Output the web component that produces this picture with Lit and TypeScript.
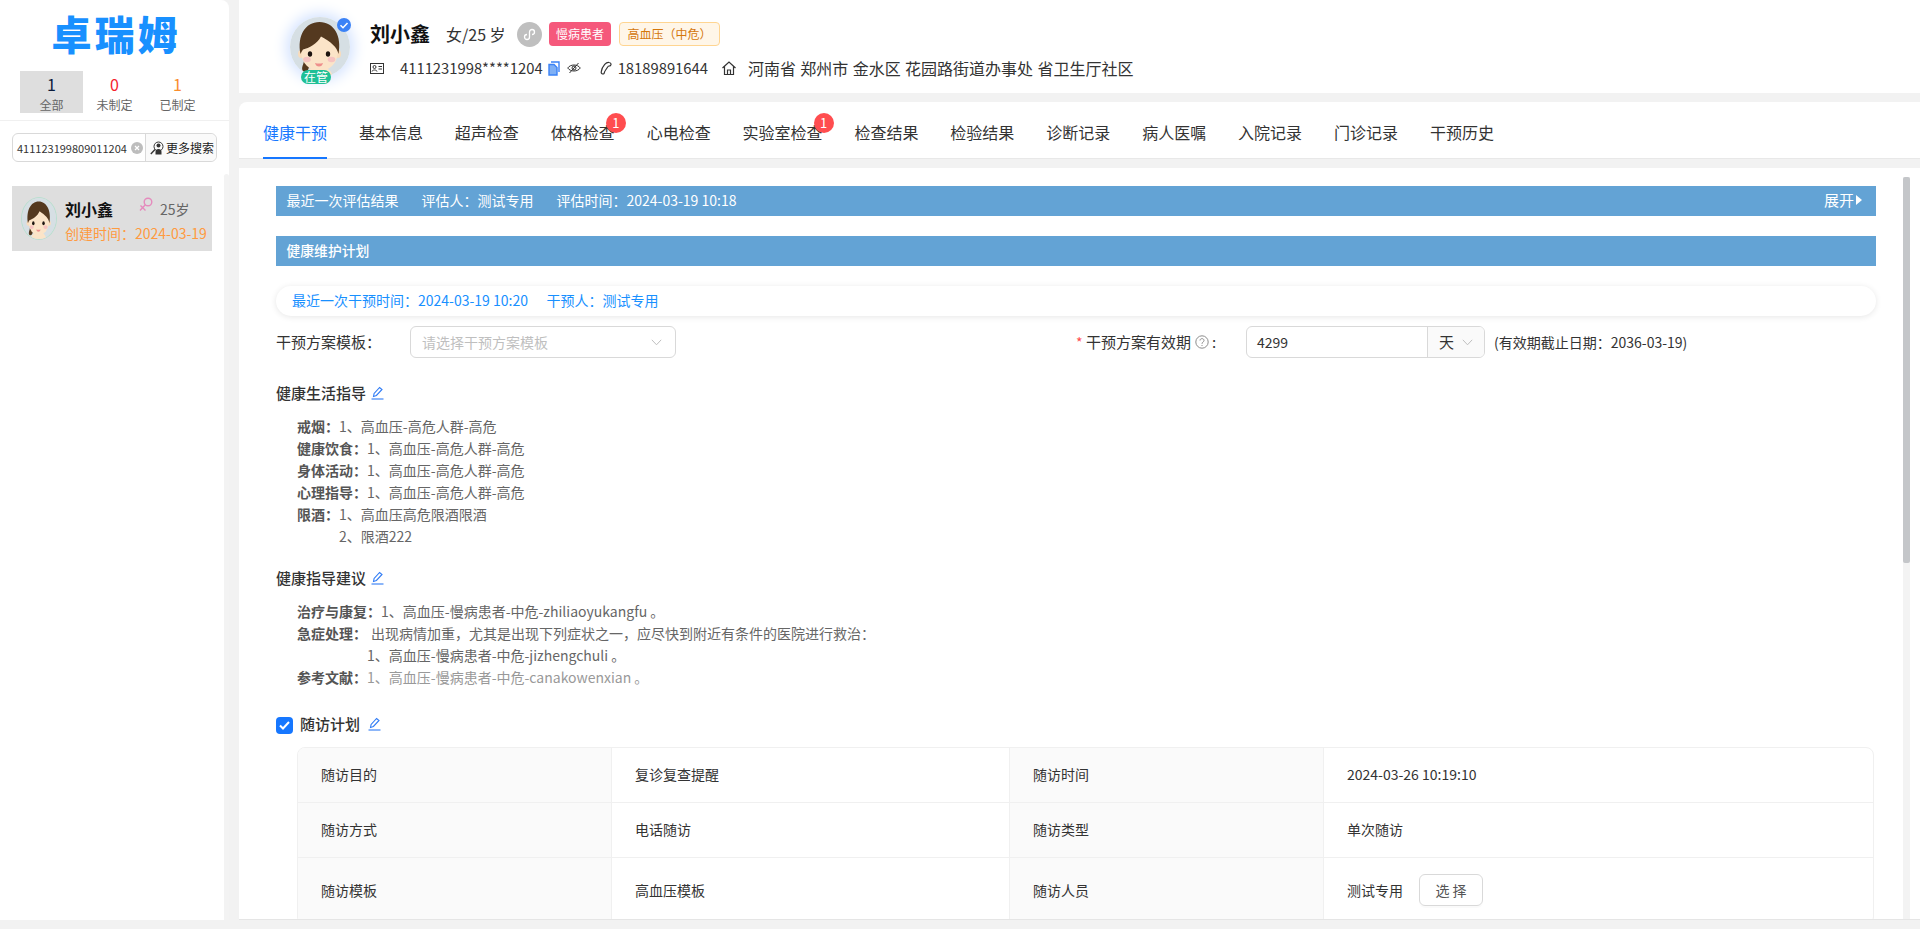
import { LitElement, html, css, svg } from "lit";
import { customElement } from "lit/decorators.js";

const face = (w: number, h: number) => svg`
  <svg class="face" width=${w} height=${h} viewBox="0 0 60 60" preserveAspectRatio="none">
    <rect width="60" height="60" fill="#d6dfe4"/>
    <path d="M14 44c-1 5-3 7-1 10 3 2 6-1 6-5z" fill="#54391f"/>
    <path d="M16 60c1-8 6-10 13-10s12 2 14 10z" fill="#fbe4c8"/>
    <ellipse cx="11" cy="37" rx="3" ry="4" fill="#f8dcbc"/>
    <ellipse cx="48" cy="37" rx="3" ry="4" fill="#f8dcbc"/>
    <ellipse cx="29.500" cy="36" rx="18" ry="18" fill="#fbe4c8"/>
    <path d="M10.500 37C7 19 15 5 29.500 5S52 19 48.500 37C47 30 41 25 31 19.500 27 27 19 31 13 32.500c-1 1.500-2 3-2.500 4.500z" fill="#54391f"/>
    <ellipse cx="20" cy="37" rx="2.200" ry="2.800" fill="#1c1410"/>
    <ellipse cx="38" cy="37" rx="2.200" ry="2.800" fill="#1c1410"/>
    <ellipse cx="17" cy="42.500" rx="3.800" ry="2.800" fill="#f6c3c0"/>
    <ellipse cx="41.500" cy="42.500" rx="3.800" ry="2.800" fill="#f6c3c0"/>
    <path d="M25 46q4 1 8 0q-1 3.500-4 3.500t-4-3.500z" fill="#ee8f8c"/>
  </svg>`;

const pencil = svg`<svg class="pen" width="13" height="14" viewBox="0 0 13 14" fill="none" stroke="#2f7bf5" stroke-width="1.100">
  <path d="M2.500 10.500l.6-3L8.600 1.500l2.400 2-5.600 6z"/><path d="M.500 13h12"/></svg>`;

const chevron = (c = "#bfbfbf") => svg`<svg width="11" height="7" viewBox="0 0 11 7" fill="none" stroke=${c} stroke-width="1"><path d="M.8.800l4.700 5 4.700-5"/></svg>`;

@customElement("app-root")
export class AppRoot extends LitElement {
  static styles = css`
    :host { display: block; width: 1920px; height: 929px; overflow: hidden; background: #f2f2f2;
      font-family: "Noto Sans CJK SC", "Liberation Sans", sans-serif; font-size: 14px; color: #333; line-height: 22px; }
    * { box-sizing: border-box; }
    svg { display: block; flex: none; }
    .layout { display: flex; height: 929px; }

    /* sidebar */
    aside { position: relative; width: 229px; height: 920px; background: #fff; border-top-right-radius: 8px; }
    .logo { height: 71px; padding-top: 9px; text-align: center; font-size: 40px; line-height: 48px; font-weight: 900; color: #1890ff; letter-spacing: 3px; text-indent: 3px; }
    .stats { display: flex; padding: 0 20px 7px; border-bottom: 1px solid #f0f0f0; height: 50px; }
    .stat { width: 63px; height: 42px; text-align: center; font-size: 12px; line-height: 18px; color: #666; padding-top: 3px; }
    .stat b { display: block; font-size: 16px; font-weight: 400; line-height: 20px; margin-bottom: 2px; }
    .stat.on { background: #dedede; }
    .n0 { color: #0a1a3a; } .n1 { color: #f5222d; } .n2 { color: #fa8c2c; }
    .search { display: flex; margin: 12px 12px 0; width: 205px; height: 29px; border: 1px solid #d9d9d9; border-radius: 6px; align-items: center; }
    .search .val { width: 133px; height: 100%; display: flex; align-items: center; padding-left: 4px; gap: 4px; border-right: 1px solid #d9d9d9;
      font-size: 11px; color: #333; white-space: nowrap; }
    .search .more { display: flex; align-items: center; gap: 2px; padding-left: 4px; font-size: 12px; color: #222; white-space: nowrap; background: #fafafa; height: 100%; flex: 1; border-radius: 0 6px 6px 0; }
    .pcard { display: flex; margin: 24px 12px 0; width: 200px; height: 65px; background: #dedede; padding: 11px 0 0 9px; }
    .oval { width: 36px; height: 43px; border-radius: 50%; border: 1px solid #b9dfd0; overflow: hidden; flex: none; }
    .pinfo { margin-left: 8px; white-space: nowrap; }
    .pline { display: flex; align-items: center; height: 24px; }
    .pname { font-size: 16px; font-weight: 700; color: #111; width: 74px; }
    .pline svg { margin-bottom: 10px; }
    .page { margin-left: 7px; color: #666; }
    .ptime { color: #ff9a3e; line-height: 22px; margin-top: 1px; }
    .strack { position: absolute; right: 0; top: 174px; bottom: 0; width: 5px; background: #f3f3f3; border-radius: 3px 3px 0 0; }

    /* main */
    main { margin-left: 10px; width: 1681px; display: flex; flex-direction: column; }
    header { height: 93px; background: #fff; display: flex; padding: 17px 0 0 51px; }
    .av { position: relative; width: 60px; height: 60px; flex: none; }
    .av .ring { width: 60px; height: 60px; border-radius: 50%; overflow: hidden; box-shadow: 0 0 14px 4px #d4e3ff; }
    .ok { position: absolute; right: -1px; top: 1px; }
    .st { position: absolute; left: 11px; top: 53px; width: 30px; height: 14px; border-radius: 7px; background: #1fbf96; color: #fff; font-size: 12px; line-height: 14px; text-align: center; }
    .info { margin: 5px 0 0 20px; }
    .r1 { display: flex; align-items: center; height: 24px; white-space: nowrap; }
    .hname { font-size: 20px; font-weight: 700; color: #111; }
    .hage { margin-left: 16px; font-size: 16px; color: #333; width: 58px; }
    .mp { margin-left: 13px; width: 25px; height: 25px; border-radius: 50%; background: #bfbfbf; display: flex; align-items: center; justify-content: center; }
    .tag { height: 24px; line-height: 22px; font-size: 12px; border-radius: 4px; padding: 0 7.500px; border: 1px solid transparent; }
    .t1 { margin-left: 7px; background: #f5587b; color: #fff; padding: 0 6px; }
    .t2 { margin-left: 8px; background: #fff6e8; border-color: #ffd591; color: #d4770c; }
    .r2 { display: flex; align-items: center; height: 20px; margin-top: 12px; white-space: nowrap; font-size: 16px; color: #333; }
    .idno { margin-left: 16px; font-size: 14.800px; }
    .i-copy { margin-left: 5px; } .i-eye { margin-left: 7px; } .i-phone { margin-left: 19px; }
    .tel { margin-left: 6px; font-size: 14.800px; } .i-home { margin-left: 14px; } .addr { margin-left: 12px; word-spacing: .8px; }

    .tabs { margin-top: 9px; height: 57px; background: #fff; border-top-left-radius: 8px; border-bottom: 1px solid #e8e8e8; display: flex; gap: 31.900px; padding-left: 24px; }
    .tab { position: relative; font-size: 16px; line-height: 22px; padding-top: 19px; height: 57px; color: #333; white-space: nowrap; }
    .tab.on { color: #1677ff; border-bottom: 2px solid #1677ff; }
    .bdg { position: absolute; right: -11px; top: 11px; width: 20px; height: 20px; border-radius: 50%; background: #ff4d4f; color: #fff; font-size: 13px; line-height: 20px; text-align: center; }

    .body { margin-top: 9px; height: 752px; background: #fff; border-bottom: 1px solid #e5e5e5; display: flex; overflow: hidden; }
    .scroller { width: 1664px; padding: 18px 27px 0 37px; height: 751px; overflow: hidden; flex: none; }
    .vtrack { width: 7px; margin-top: 9px; background: #f3f3f3; flex: none; }
    .thumb { height: 386px; background: #c4c6c9; border-radius: 2px; }

    .bar { height: 30px; background: #63a3d5; color: #fff; display: flex; align-items: center; padding: 0 14px 2px 10.500px; white-space: nowrap; }
    .bar span + span { margin-left: 23px; }
    .bar .exp { margin-left: auto; display: flex; align-items: center; gap: 2px; font-size: 15px; }
    .bar2 { margin-top: 20px; font-weight: 500; font-size: 13.800px; }
    .pill { margin-top: 20px; height: 30px; border-radius: 15px; background: #fff; box-shadow: 0 1px 6px rgba(0,0,0,.1); color: #1890ff; display: flex; align-items: center; padding: 0 16px 2px; gap: 18.500px; white-space: nowrap; }
    .form { margin-top: 10px; height: 32px; display: flex; align-items: center; }
    .lb { font-size: 15px; color: #333; white-space: nowrap; width: 134px; }
    .sel { width: 266px; height: 32px; border: 1px solid #d9d9d9; border-radius: 6px; display: flex; align-items: center; justify-content: space-between; padding: 0 13px 0 11px; color: #bfbfbf; }
    .rq { margin-left: 400px; display: flex; align-items: center; width: 170px; font-size: 15px; white-space: nowrap; }
    .rq i { color: #ff4d4f; font-style: normal; margin-right: 4px; font-size: 14px; width: 6px; }
    .rq svg { margin: 0 3px 0 4px; }
    .num { width: 239px; height: 32px; border: 1px solid #d9d9d9; border-radius: 6px; display: flex; overflow: hidden; }
    .num .v { width: 180px; padding-left: 10px; line-height: 30px; font-size: 14px; }
    .num .u { flex: 1; background: #fafafa; border-left: 1px solid #d9d9d9; display: flex; align-items: center; padding-left: 11px; gap: 8px; font-size: 15px; }
    .note { margin-left: 9px; font-size: 14px; white-space: nowrap; }
    .ttl { display: flex; align-items: center; gap: 5px; font-size: 15px; font-weight: 500; height: 22px; color: #333; white-space: nowrap; padding-bottom: 2px; }
    .t-a { margin-top: 25px; } .t-b { margin-top: 21px; } .t-c { margin-top: 26px; gap: 8px; }
    .cb { width: 17px; height: 17px; border-radius: 4px; background: #1677ff; display: flex; align-items: center; justify-content: center; margin-right: -1px; margin-top: 2px; }
    .list { margin: 10px 0 0 21px; }
    .row { display: flex; color: #666; white-space: nowrap; }
    .row b { font-weight: 700; color: #555; }
    .row .vals div { height: 22px; }
    .pad { padding-left: 4px; }
    .mute { color: #999; }
    .desc { margin: 11px 0 0 21px; width: 1577px; border: 1px solid #f0f0f0; border-radius: 8px; display: grid; grid-template-columns: 314px 398px 314px 1fr; grid-template-rows: 55px 55px 66px; overflow: hidden; }
    .desc > div { display: flex; align-items: center; padding: 0 0 2px 23px; border-right: 1px solid #f0f0f0; border-bottom: 1px solid #f0f0f0; white-space: nowrap; }
    .desc > div:nth-child(4n) { border-right: 0; }
    .desc .k { background: #fafafa; }
    .btn { margin-left: 16px; width: 64px; height: 32px; border: 1px solid #d9d9d9; border-radius: 6px; text-align: center; line-height: 30px; color: #555; box-shadow: 0 2px 0 rgba(0,0,0,.02); }
  `;

  tabs = [
    ["健康干预", 0], ["基本信息", 0], ["超声检查", 0], ["体格检查", 1], ["心电检查", 0], ["实验室检查", 1],
    ["检查结果", 0], ["检验结果", 0], ["诊断记录", 0], ["病人医嘱", 0], ["入院记录", 0], ["门诊记录", 0], ["干预历史", 0],
  ] as [string, number][];

  render() {
    return html`<div class="layout">
      <aside>
        <div class="logo">卓瑞姆</div>
        <div class="stats">
          <div class="stat on"><b class="n0">1</b>全部</div>
          <div class="stat"><b class="n1">0</b>未制定</div>
          <div class="stat"><b class="n2">1</b>已制定</div>
        </div>
        <div class="search">
          <div class="val">411123199809011204
            <svg width="12" height="12" viewBox="0 0 12 12"><circle cx="6" cy="6" r="6" fill="#bdbdbd"/><path d="M4 4l4 4M8 4l-4 4" stroke="#fff" stroke-width="1.200"/></svg>
          </div>
          <div class="more">
            <svg width="14" height="14" viewBox="0 0 14 14"><circle cx="8.500" cy="5.500" r="4.500" fill="none" stroke="#333" stroke-width="1"/><circle cx="8.500" cy="4.500" r="2" fill="#333"/><path d="M5.500 11a3 3 0 0 1 6 0v2.500h-6z" fill="#333"/><path d="M5 8.500L.8 13" stroke="#333" stroke-width="1.400"/></svg>
            更多搜索
          </div>
        </div>
        <div class="pcard">
          <div class="oval">${face(34, 41)}</div>
          <div class="pinfo">
            <div class="pline"><span class="pname">刘小鑫</span>
              <svg width="14" height="15" viewBox="0 0 14 15" fill="none" stroke="#e58bbd" stroke-width="1.400"><circle cx="9" cy="5" r="3.800"/><path d="M6.300 7.800L1 13.500M1.500 8.500l5 5"/></svg>
              <span class="page">25岁</span>
            </div>
            <div class="ptime">创建时间：2024-03-19</div>
          </div>
        </div>
        <div class="strack"></div>
      </aside>
      <main>
        <header>
          <div class="av">
            <div class="ring">${face(60, 60)}</div>
            <svg class="ok" width="14" height="14" viewBox="0 0 14 14"><circle cx="7" cy="7" r="7" fill="#3b82f6"/><path d="M3.500 7.200l2.500 2.500 4.500-4.800" fill="none" stroke="#fff" stroke-width="1.500"/></svg>
            <div class="st">在管</div>
          </div>
          <div class="info">
            <div class="r1">
              <span class="hname">刘小鑫</span>
              <span class="hage">女/25 岁</span>
              <span class="mp"><svg width="15" height="15" viewBox="0 0 15 15" fill="none" stroke="#fff" stroke-width="1.300"><path d="M7.500 5v5a2.500 2.500 0 1 1-2.500-2.500M7.500 10V5A2.500 2.500 0 1 1 10 7.500"/></svg></span>
              <span class="tag t1">慢病患者</span>
              <span class="tag t2">高血压（中危）</span>
            </div>
            <div class="r2">
              <svg width="14" height="11" viewBox="0 0 14 11" fill="none" stroke="#333"><rect x=".5" y=".5" width="13" height="10"/><circle cx="4.500" cy="4" r="1.500"/><path d="M2 8.500c.3-2 4.700-2 5 0M8.500 3.500h3.500M8.500 6h3.500"/></svg>
              <span class="idno">4111231998****1204</span>
              <svg class="i-copy" width="12" height="15" viewBox="0 0 12 15" fill="none" stroke="#3b82f6" stroke-width="1.400"><path d="M3 1h8v10"/><path d="M1 3.500h5l3 3v7.500H1z" fill="#7fb0f5" stroke="#3b82f6"/></svg>
              <svg class="i-eye" width="14" height="12" viewBox="0 0 14 12" fill="none" stroke="#333"><path d="M.7 6C3.500 2 10.500 2 13.300 6 10.500 10 3.500 10 .7 6z"/><circle cx="7" cy="6" r="2"/><path d="M2.500 11L11.500 1"/></svg>
              <svg class="i-phone" width="12" height="14" viewBox="0 0 12 14" fill="none" stroke="#333" stroke-width="1.200"><path d="M9 1.500c2 0 2.500 2 1.500 3-.8.800-2 .2-2.500 1L5 10c-.8 1-.3 2-1.200 2.700-1 .8-2.800-.2-2.600-1.800.2-3 1.800-5.500 3.500-7.500C6.200 1.800 7.400 1.300 9 1.500z"/></svg>
              <span class="tel">18189891644</span>
              <svg class="i-home" width="14" height="14" viewBox="0 0 14 14" fill="none" stroke="#333" stroke-width="1.200"><path d="M.5 7L7 1l6.500 6M2.500 5.500v8h9v-8M5.500 13.500V9h3v4.500"/></svg>
              <span class="addr">河南省 郑州市 金水区 花园路街道办事处 省卫生厅社区</span>
            </div>
          </div>
        </header>
        <nav class="tabs">
          ${this.tabs.map(([t, n], i) => html`<div class="tab ${i === 0 ? "on" : ""}">${t}${n ? html`<span class="bdg">${n}</span>` : ""}</div>`)}
        </nav>
        <div class="body">
          <div class="scroller">
            <div class="bar">
              <span>最近一次评估结果</span><span>评估人：测试专用</span><span>评估时间：2024-03-19 10:18</span>
              <div class="exp">展开<svg width="6" height="10" viewBox="0 0 6 10"><path d="M0 0l6 5-6 5z" fill="#fff"/></svg></div>
            </div>
            <div class="bar bar2"><span>健康维护计划</span></div>
            <div class="pill"><span>最近一次干预时间：2024-03-19 10:20</span><span>干预人：测试专用</span></div>
            <div class="form">
              <div class="lb">干预方案模板：</div>
              <div class="sel"><span>请选择干预方案模板</span>${chevron()}</div>
              <div class="rq"><i>*</i>干预方案有效期<svg width="14" height="14" viewBox="0 0 14 14" fill="none" stroke="#8c8c8c"><circle cx="7" cy="7" r="6.200"/><path d="M5 5.500c0-2.500 4-2.500 4 0 0 1.500-2 1.500-2 3.300M7 10v1"/></svg>:</div>
              <div class="num"><div class="v">4299</div><div class="u">天${chevron()}</div></div>
              <div class="note">(有效期截止日期：2036-03-19)</div>
            </div>
            <div class="ttl t-a">健康生活指导${pencil}</div>
            <div class="list">
              <div class="row"><b>戒烟：</b><div class="vals"><div>1、高血压-高危人群-高危</div></div></div>
              <div class="row"><b>健康饮食：</b><div class="vals"><div>1、高血压-高危人群-高危</div></div></div>
              <div class="row"><b>身体活动：</b><div class="vals"><div>1、高血压-高危人群-高危</div></div></div>
              <div class="row"><b>心理指导：</b><div class="vals"><div>1、高血压-高危人群-高危</div></div></div>
              <div class="row"><b>限酒：</b><div class="vals"><div>1、高血压高危限酒限酒</div><div>2、限酒222</div></div></div>
            </div>
            <div class="ttl t-b">健康指导建议${pencil}</div>
            <div class="list">
              <div class="row"><b>治疗与康复：</b><div class="vals"><div>1、高血压-慢病患者-中危-zhiliaoyukangfu 。</div></div></div>
              <div class="row"><b>急症处理：</b><div class="vals"><div class="pad">出现病情加重，尤其是出现下列症状之一，应尽快到附近有条件的医院进行救治：</div><div>1、高血压-慢病患者-中危-jizhengchuli 。</div></div></div>
              <div class="row"><b>参考文献：</b><div class="vals"><div class="mute">1、高血压-慢病患者-中危-canakowenxian 。</div></div></div>
            </div>
            <div class="ttl t-c">
              <span class="cb"><svg width="11" height="9" viewBox="0 0 11 9" fill="none" stroke="#fff" stroke-width="2"><path d="M1 4.500l3 3 6-6.500"/></svg></span>
              <span>随访计划</span>${pencil}
            </div>
            <div class="desc">
              <div class="k">随访目的</div><div>复诊复查提醒</div><div class="k">随访时间</div><div>2024-03-26 10:19:10</div>
              <div class="k">随访方式</div><div>电话随访</div><div class="k">随访类型</div><div>单次随访</div>
              <div class="k">随访模板</div><div>高血压模板</div><div class="k">随访人员</div><div>测试专用<span class="btn">选 择</span></div>
            </div>
          </div>
          <div class="vtrack"><div class="thumb"></div></div>
        </div>
      </main>
    </div>`;
  }
}
